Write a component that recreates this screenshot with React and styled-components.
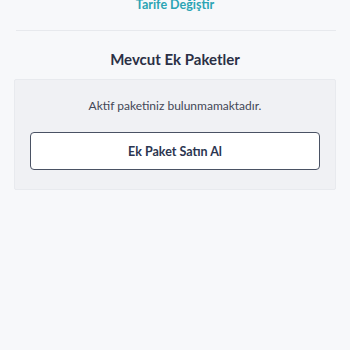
import styled, { createGlobalStyle } from 'styled-components';

const Global = createGlobalStyle`
  html, body {
    margin: 0;
    padding: 0;
    background: #f7f8fa;
    font-family: 'Lato', 'Noto Sans', sans-serif;
  }
`;

const Page = styled.div`
  width: 350px;
  min-height: 350px;
  background: #f7f8fa;
  display: flex;
  flex-direction: column;
  align-items: center;
`;

const TopLink = styled.a`
  margin-top: -5px;
  height: 21px;
  font-size: 12.5px;
  font-weight: 700;
  line-height: 20px;
  color: #2ba4b4;
  text-decoration: none;
`;

const Divider = styled.div`
  align-self: stretch;
  margin: 14px 14px 0 16px;
  height: 1px;
  background: #e7e9ed;
`;

const Heading = styled.h2`
  margin: 18px 0 0;
  font-size: 15px;
  font-weight: 700;
  line-height: 20px;
  color: #2b3045;
`;

const Panel = styled.div`
  align-self: stretch;
  margin: 10px 14px 0 14px;
  padding: 17px 15px 19px;
  background: #f0f1f4;
  border: 1px solid #e8eaee;
  border-radius: 2px;
  display: flex;
  flex-direction: column;
  align-items: center;
`;

const Empty = styled.p`
  margin: 0;
  font-size: 12px;
  line-height: 18px;
  color: #434756;
`;

const Button = styled.button`
  margin-top: 17px;
  align-self: stretch;
  height: 38px;
  background: #ffffff;
  border: 1px solid #4a5264;
  border-radius: 4px;
  font-family: inherit;
  font-size: 12.5px;
  font-weight: 700;
  color: #2b3550;
  cursor: pointer;
`;

export default function App() {
  return (
    <>
      <Global />
      <Page>
        <TopLink href="#">Tarife Değiştir</TopLink>
        <Divider />
        <Heading>Mevcut Ek Paketler</Heading>
        <Panel>
          <Empty>Aktif paketiniz bulunmamaktadır.</Empty>
          <Button>Ek Paket Satın Al</Button>
        </Panel>
      </Page>
    </>
  );
}
